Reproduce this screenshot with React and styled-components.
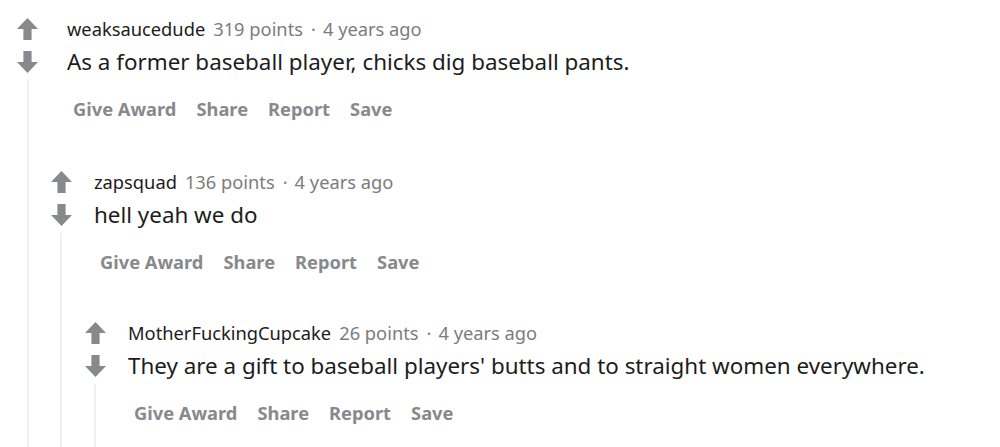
import React from "react";
import styled, { createGlobalStyle } from "styled-components";

const Global = createGlobalStyle`
  html, body {
    margin: 0;
    padding: 0;
    background: #ffffff;
    overflow: hidden;
  }
  body {
    font-family: "Noto Sans", Arial, sans-serif;
    -webkit-font-smoothing: antialiased;
  }
`;

const Page = styled.div`
  width: 1000px;
  height: 447px;
  overflow: hidden;
  box-sizing: border-box;
  padding: 18px 0 0 17px;
`;

const CommentBox = styled.div`
  display: flex;
  flex-direction: column;
  padding-top: ${(p) => p.$top}px;
`;

const Top = styled.div`
  display: flex;
  align-items: flex-start;
`;

const Votes = styled.div`
  display: flex;
  flex-direction: column;
  gap: 11px;
  width: 21px;
  flex-shrink: 0;
`;

const VoteButton = styled.button`
  all: unset;
  display: block;
  width: 21px;
  height: 22px;
  color: #878a8c;
  cursor: pointer;
  svg {
    display: block;
  }
`;

const Content = styled.div`
  display: flex;
  flex-direction: column;
  gap: 11px;
  margin-left: ${(p) => p.$gap}px;
  min-width: 0;
`;

const Header = styled.div`
  font-size: 18.3px;
  line-height: 22px;
  color: #7c7c7c;
  white-space: nowrap;
`;

const Author = styled.span`
  color: #1c1c1c;
  margin-right: 8px;
`;

const Dot = styled.span`
  margin: 0 7px 0 8px;
`;

const Body = styled.p`
  margin: 0;
  font-size: 22.4px;
  line-height: 22px;
  color: #1c1c1c;
  white-space: nowrap;
`;

const Thread = styled.div`
  display: flex;
  margin-top: ${(p) => p.$lineTop}px;
`;

const ThreadLine = styled.div`
  width: 2px;
  flex-shrink: 0;
  margin-left: ${(p) => p.$inset}px;
  background: #edeff1;
  min-height: ${(p) => (p.$last ? 200 : 0)}px;
`;

const Replies = styled.div`
  display: flex;
  flex-direction: column;
  padding-left: ${(p) => p.$indent}px;
`;

const Actions = styled.div`
  display: flex;
  gap: 20px;
  margin-top: 18px;
  margin-left: ${(p) => p.$offset}px;
`;

const Action = styled.button`
  all: unset;
  font-family: "Noto Sans", Arial, sans-serif;
  font-weight: 700;
  font-size: 18.3px;
  line-height: 22px;
  color: #878a8c;
  cursor: pointer;
  white-space: nowrap;
`;

const Arrow = ({ down }) => (
  <svg
    width="21"
    height="22"
    viewBox="0 0 21 22"
    style={down ? { transform: "rotate(180deg)" } : undefined}
  >
    <path d="M10.5 0 L21 11 H14.6 V22 H6.4 V11 H0 Z" fill="currentColor" />
  </svg>
);

function Comment({ author, points, text, gap, top = 0, inset = 10, last, children }) {
  const indent = 32 - inset;
  return (
    <CommentBox $top={top}>
      <Top>
        <Votes>
          <VoteButton aria-label="upvote">
            <Arrow />
          </VoteButton>
          <VoteButton aria-label="downvote">
            <Arrow down />
          </VoteButton>
        </Votes>
        <Content $gap={gap}>
          <Header>
            <Author>{author}</Author>
            {points} points
            <Dot>·</Dot>4 years ago
          </Header>
          <Body>{text}</Body>
        </Content>
      </Top>
      <Thread $lineTop={7}>
        <ThreadLine $inset={inset} $last={last} />
        <Replies $indent={indent}>
          <Actions $offset={gap + 21 + 6 - 32 - 2 - 5 + 5}>
            <Action>Give Award</Action>
            <Action>Share</Action>
            <Action>Report</Action>
            <Action>Save</Action>
          </Actions>
          {children}
        </Replies>
      </Thread>
    </CommentBox>
  );
}

export default function App() {
  return (
    <>
      <Global />
      <Page>
        <Comment
          author="weaksaucedude"
          points={319}
          text="As a former baseball player, chicks dig baseball pants."
          gap={29}
          inset={10}
        >
          <Comment
            author="zapsquad"
            points={136}
            text="hell yeah we do"
            gap={22}
            top={51}
            inset={9}
          >
            <Comment
              author="MotherFuckingCupcake"
              points={26}
              text="They are a gift to baseball players' butts and to straight women everywhere."
              gap={22}
              top={49}
              inset={9}
              last
            />
          </Comment>
        </Comment>
      </Page>
    </>
  );
}
